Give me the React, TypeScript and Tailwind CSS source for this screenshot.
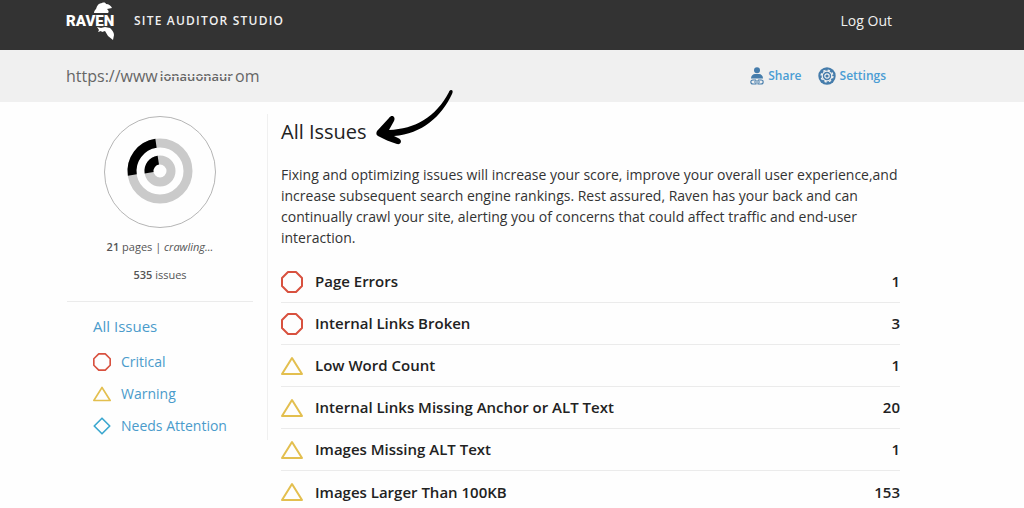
import type { ReactNode } from 'react';

type Level = 'critical' | 'warning' | 'attention';

const issues: { level: Level; label: string; count: number }[] = [
  { level: 'critical', label: 'Page Errors', count: 1 },
  { level: 'critical', label: 'Internal Links Broken', count: 3 },
  { level: 'warning', label: 'Low Word Count', count: 1 },
  { level: 'warning', label: 'Internal Links Missing Anchor or ALT Text', count: 20 },
  { level: 'warning', label: 'Images Missing ALT Text', count: 1 },
  { level: 'warning', label: 'Images Larger Than 100KB', count: 153 },
];

const filters: { level: Level; label: string }[] = [
  { level: 'critical', label: 'Critical' },
  { level: 'warning', label: 'Warning' },
  { level: 'attention', label: 'Needs Attention' },
];

function LevelIcon({ level, className }: { level: Level; className: string }) {
  return (
    <svg viewBox="0 0 22 22" fill="none" strokeWidth="2" strokeLinejoin="round" className={className} aria-hidden="true">
      {level === 'critical' && <path d="M7 1h8l6 6v8l-6 6H7l-6-6V7z" stroke="#d8513f" />}
      {level === 'warning' && <path d="M11 3 21 19H1z" stroke="#e3bf4f" />}
      {level === 'attention' && <path d="M11 1.500 20.500 11 11 20.500 1.500 11z" stroke="#3ba7cf" />}
    </svg>
  );
}

function Logo() {
  return (
    <a href="#home" aria-label="Raven" className="relative flex h-10 w-12 items-center text-white">
      <span className="font-['Roboto',sans-serif] text-[15px] leading-4 font-black">RAVEN</span>
      <svg viewBox="0 0 48 40" className="absolute inset-0 h-10 w-12" fill="#fff" aria-hidden="true">
        <path d="M28 12c0-2 1-3 2-4 1-4 3-6 6-6 2-1 4 0 4 1 3 0 5 2 6 4l-5 1c2 2 2 3 1 4z" />
        <path d="M31 26l4 1 4-1 5 1c2 2 4 4 4 7l-1 5-5-4-3-5-3 1-1-1-3 1 1-2z" />
      </svg>
    </a>
  );
}

function ShareIcon() {
  return (
    <svg viewBox="0 0 14 18" className="h-[18px] w-3.5" fill="#457cab" aria-hidden="true">
      <circle cx="7" cy="3.200" r="3" />
      <path d="M1 11.500C1 8.500 3 7 5 7h4c2 0 4 1.500 4 4.500z" />
      <path
        d="M6 13H3Q.800 13 .800 15T3 17h3v-1M6 13v1M8 13h3q2.200 0 2.200 2T11 17H8v-1M8 13v1M4 15h6"
        fill="none"
        stroke="#457cab"
        strokeWidth="1.100"
      />
    </svg>
  );
}

function SettingsIcon() {
  return (
    <svg viewBox="0 0 18 18" className="size-[18px]" fill="none" aria-hidden="true">
      <circle cx="9" cy="9" r="8.700" fill="#457cab" />
      <circle cx="9" cy="9" r="4.800" stroke="#f0f0f0" strokeWidth="1.200" />
      <circle cx="9" cy="9" r="5.900" stroke="#f0f0f0" strokeWidth="1.400" strokeDasharray="2.317 2.317" />
      <circle cx="9" cy="9" r="2.200" stroke="#f0f0f0" strokeWidth="1.200" />
    </svg>
  );
}

function ToolLink({ href, icon, children }: { href: string; icon: ReactNode; children: ReactNode }) {
  return (
    <a href={href} className="flex items-center gap-1 text-xs font-semibold text-[#4a9dd4]">
      {icon}
      {children}
    </a>
  );
}

function CrawlProgress() {
  return (
    <svg viewBox="0 0 112 112" fill="none" className="size-28" role="img" aria-label="Crawl progress">
      <circle cx="56" cy="56" r="55.500" stroke="#b5b5b5" />
      <circle cx="56" cy="55" r="28" stroke="#cacaca" strokeWidth="9" />
      <circle cx="56" cy="55" r="11" stroke="#cacaca" strokeWidth="9" />
      <path d="M28.300 59A28 28 0 0 1 52 27.300" stroke="#000" strokeWidth="9" />
      <path d="M45.100 56.700A11 11 0 0 1 54.300 44.100" stroke="#000" strokeWidth="9" />
    </svg>
  );
}

export default function App() {
  return (
    <div className="min-h-screen bg-[#fefefe] font-['Open_Sans',sans-serif] text-[#222]">
      <header className="flex h-[50px] items-center bg-[#333] pr-[132px] pb-2 pl-[66px] text-[#f0f0f0]">
        <Logo />
        <span className="ml-5 text-xs font-semibold tracking-widest">SITE AUDITOR STUDIO</span>
        <a href="#logout" className="ml-auto text-sm">Log Out</a>
      </header>

      <div className="flex h-[52px] items-center justify-between bg-[#f0f0f0] pr-[138px] pl-[66px]">
        <div className="flex items-center text-base text-[#666]">
          <span>https://www</span>
          <span className="relative mx-0.5 text-[13px] leading-4 font-semibold">
            ionauonaur
            <span className="absolute inset-x-0 top-1/2 h-px bg-[#f0f0f0]" />
          </span>
          <span>om</span>
        </div>
        <nav className="flex gap-4">
          <ToolLink href="#share" icon={<ShareIcon />}>Share</ToolLink>
          <ToolLink href="#settings" icon={<SettingsIcon />}>Settings</ToolLink>
        </nav>
      </div>

      <div className="flex items-start pr-[124px] pl-[67px]">
        <aside className="mt-3 w-[201px] shrink-0 border-r border-[#f0f0f0] pr-3.5 pb-1">
          <div className="flex flex-col items-center border-b border-[#ebebeb] pt-0.5 pb-4 text-[11px] leading-5 text-[#555]">
            <CrawlProgress />
            <p className="mt-[9px]">
              <b className="font-semibold">21</b> pages | <i>crawling...</i>
            </p>
            <p className="mt-2">
              <b className="font-semibold">535</b> issues
            </p>
          </div>
          <nav className="flex flex-col gap-3 pt-3.5 pl-[26px] text-sm leading-5 text-[#4a9bcb]">
            <a href="#all" className="mb-1 text-[15px]">All Issues</a>
            {filters.map((f) => (
              <a key={f.label} href={`#${f.level}`} className="flex items-center gap-2.5">
                <LevelIcon level={f.level} className="size-[18px]" />
                {f.label}
              </a>
            ))}
          </nav>
        </aside>

        <main className="min-w-0 flex-1 pl-[13px]">
          <div className="relative mt-4">
            <h1 className="text-xl leading-7">All Issues</h1>
            <svg viewBox="0 0 78 58" className="absolute -top-7 left-[95px] h-[58px] w-[78px]" aria-hidden="true">
              <path d="M75 0c2 0 2 2 1 4C66 26 46 44 18 46l4 2c5 2 3 7-1 6C14 52 8 49 2 46c-2-1-2-3-1-5L13 28c3-4 7-1 5 3l-5 9C39 39 60 27 73 2c0-1 1-2 2-2z" />
            </svg>
          </div>
          <p className="mt-[18px] text-sm leading-[21px] text-[#333]">
            Fixing and optimizing issues will increase your score, improve your overall user experience,and
            increase subsequent search engine rankings. Rest assured, Raven has your back and can continually
            crawl your site, alerting you of concerns that could affect traffic and end-user interaction.
          </p>
          <ul className="mt-[13px] divide-y divide-[#ebebeb]">
            {issues.map((issue) => (
              <li key={issue.label} className="flex h-[42px] items-center text-[15px] font-semibold">
                <LevelIcon level={issue.level} className="mr-3 size-[22px]" />
                <span>{issue.label}</span>
                <span className="ml-auto">{issue.count}</span>
              </li>
            ))}
          </ul>
        </main>
      </div>
    </div>
  );
}
